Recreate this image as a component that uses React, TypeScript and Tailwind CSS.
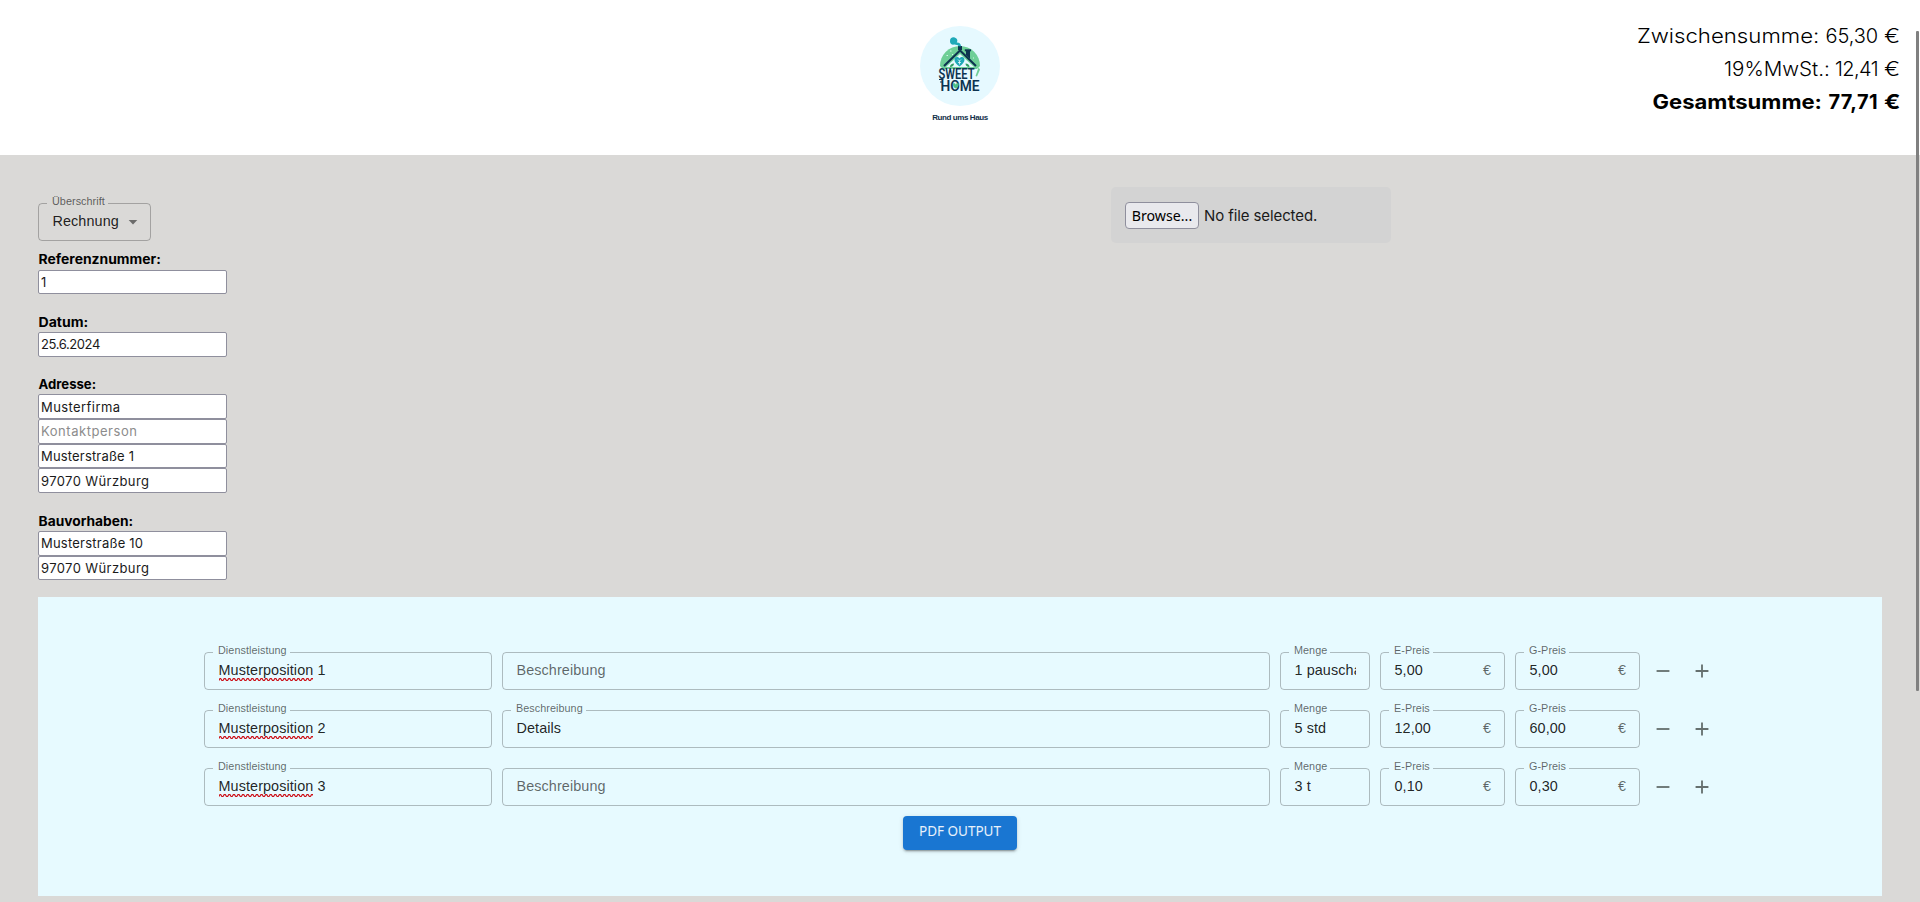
import type { ReactNode } from "react";

type FieldProps = { label: string; value?: ReactNode; className: string; euro?: boolean; children?: ReactNode };

function Field({ label, value, className, euro, children }: FieldProps) {
  return (
    <div className={`relative flex h-[38px] items-center px-[14px] text-[14.4px] leading-[21px] text-black/87 ${className}`}>
      <fieldset
        className={`pointer-events-none absolute inset-x-0 bottom-0 rounded-[4px] border border-black/25 px-[8px] ${value !== undefined ? "-top-[5px]" : "top-0"}`}
      >
        {value !== undefined && (
          <legend className="h-[11px] pr-[3px] pl-[5px] text-[10.8px] leading-[11px] tracking-[0.06px] text-black/60">
            <span className="relative -top-[2px] block whitespace-nowrap">{label}</span>
          </legend>
        )}
      </fieldset>
      <span className="relative -top-px -mb-[4px] min-w-0 flex-1 overflow-hidden pb-[4px] pl-[0.5px] tracking-[0.09px] whitespace-nowrap">
        {value ?? <span className="text-black/60">{label}</span>}
      </span>
      {euro && <span className="relative -top-px text-black/60">€</span>}
      {children}
    </div>
  );
}

const wave = "M0 2.5" + Array.from({ length: 22 }, (_, i) => `Q${i * 4.6 + 1.15} -0.9 ${i * 4.6 + 2.3} 1.5T${i * 4.6 + 4.6} 1.5`).join("");

function Misspelled({ children }: { children: string }) {
  return (
    <span className="relative inline-block">
      {children}
      <svg className="absolute bottom-0 left-0 w-full overflow-hidden" height="3" fill="none" stroke="#cc1018" strokeWidth="1.2">
        <path d={wave} />
      </svg>
    </span>
  );
}

function TextInput({ value, placeholder, tracking }: { value?: string; placeholder?: string; tracking: string }) {
  return (
    <input
      className={`block h-[24.67px] w-[189px] rounded-[2px] border border-[#8f8f9d] bg-white px-[2px] text-[13px] text-[#1a1a1a] placeholder:text-[#8c8c8c] ${tracking}`}
      defaultValue={value}
      placeholder={placeholder}
    />
  );
}

function Label({ children, scale }: { children: string; scale: string }) {
  return <div className={`h-[22px] origin-left pl-[0.5px] text-[13px] leading-[18px] font-bold text-black ${scale}`}>{children}</div>;
}

function Total({ label, amount, labelClass, amountClass, bold }: { label: string; amount: string; labelClass: string; amountClass: string; bold?: boolean }) {
  return (
    <div className={`flex h-[32.8px] items-center justify-end text-[20px] text-black ${bold ? "font-bold" : "font-[350]"}`}>
      <span className={`origin-right ${labelClass}`}>{label}</span>
      <span className={`ml-[5px] text-right whitespace-nowrap ${amountClass}`}>{amount}</span>
      <span className="ml-[6px] w-[16px] origin-left scale-x-120">€</span>
    </div>
  );
}

function Logo() {
  return (
    <svg width="80" height="80" viewBox="0 0 80 80">
      <circle cx="40" cy="40" r="40" fill="#e6f9ff" />
      <path d="M20 40a20 20 0 1 1 40 0l-3 3H23z" fill="#6fcf97" />
      <path d="M26 41 40 28l14 13z" fill="#e6f9ff" />
      <path d="M38 24v-4h4v4zM46 24h4v9l-4-4z" fill="#0c3350" />
      <path d="M44.800 23.300h6.200v2h-6.200z" fill="#0c3350" />
      <path d="m24 40 16-15.500L56 40" fill="none" stroke="#0c3350" strokeWidth="2" />
      <path d="M30 15.500c-.3-4 3.500-5.200 6-3.300 2 1.500 1.300 3.500.7 4.300 2.500-.2 4.300 1.200 4.300 3.700h-2.500c-.3-1.700-2.500-1.200-4-1.700-2.500.6-4.500-.5-4.500-3z" fill="#1fa9b8" />
      <path d="M39.500 40.500c-7-4.500-5.500-9.500-2.500-9.500 1.300 0 2.100.7 2.500 1.500.4-.8 1.200-1.500 2.500-1.500 3 0 4.500 5-2.500 9.500z" fill="#1fa9b8" />
      <path d="m38 33.500 1.500 1.500 1.500-1.500M39.500 35v3.500M38 36.500h3" fill="none" stroke="#e6f9ff" strokeWidth=".8" />
      <path d="M30 41c0-2 1.500-3.500 4-3.500 0 2-1.500 3.500-4 3.500zM49.500 41c0-2-1.500-3.500-4-3.500 0 2 1.500 3.500 4 3.500z" fill="#2f9e63" />
      <path d="M26.500 29.500h1.500M30 25h1.500M32 28.500h1M53 32h1" stroke="#d5f5e8" strokeWidth="1" />
      <path d="m55.500 50 3-8.500 1.500 2-3 7z" fill="#6fcf97" />
      <text x="18.500" y="52.500" textLength="36" lengthAdjust="spacingAndGlyphs" fontFamily="Roboto, sans-serif" fontWeight="600" fontSize="15" fill="#0c3350">SWEET</text>
      <text x="20.500" y="65" textLength="39" lengthAdjust="spacingAndGlyphs" fontFamily="Roboto, sans-serif" fontWeight="600" fontSize="15" fill="#0c3350">HOME</text>
      <path d="M32.800 57.500c1.500-.5 2.500 0 3 1.200.5-1.200 1.500-1.700 3-1.200 0 2.500-1 4.200-3 5-2-.8-3-2.500-3-5z" fill="#4fbf88" />
      <path d="M19 53.500h4.500M20 56h3" stroke="#0c3350" strokeWidth="1" />
    </svg>
  );
}

const rows: { n: string; details?: string; menge: string; ep: string; gp: string }[] = [
  { n: "1", menge: "1 pauschal", ep: "5,00", gp: "5,00" },
  { n: "2", details: "Details", menge: "5 std", ep: "12,00", gp: "60,00" },
  { n: "3", menge: "3 t", ep: "0,10", gp: "0,30" },
];

export default function App() {
  return (
    <div className="relative h-[902px] w-full overflow-hidden bg-[#dad9d7] font-['Inter',sans-serif]">
      <header className="grid h-[155px] grid-cols-3 bg-white">
        <div />
        <div className="flex flex-col items-center pt-[26px]">
          <Logo />
          <div className="mt-[6px] h-[12px] font-['Liberation_Sans',sans-serif] text-[8px] leading-[12px] font-bold tracking-[-0.4px] text-[#12304a]">Rund ums Haus</div>
        </div>
        <div className="pt-[20px] pr-[20px]">
          <Total label="Zwischensumme:" amount="65,30" labelClass="scale-x-111" amountClass="w-[53.5px] tracking-[-0.1px]" />
          <Total label="19%MwSt.:" amount="12,41" labelClass="scale-x-103" amountClass="w-[43.5px] tracking-[-0.6px]" />
          <Total label="Gesamtsumme:" amount="77,71" labelClass="scale-x-110" amountClass="w-[51px] tracking-[0.4px]" bold />
        </div>
      </header>

      <main className="px-[38px]">
        <div className="flex h-[442px] items-start">
          <div className="w-[1073px] pt-[48px]">
            <div className="font-['Liberation_Sans',sans-serif]">
              <Field label="Überschrift" value="Rechnung" className="w-[113px]">
                <svg className="-mr-px" width="10" height="5" viewBox="0 0 10 5">
                  <path d="M.7 0h8.600L5 4.500z" fill="#6b6b6a" />
                </svg>
              </Field>
            </div>
            <div className="mt-[9px]">
              <Label scale="scale-x-107">Referenznummer:</Label>
              <div className="-mt-[2.200px]">
                <TextInput value="1" tracking="tracking-normal" />
              </div>
            </div>
            <div className="mt-[19px]">
              <Label scale="scale-x-108">Datum:</Label>
              <div className="-mt-[3.500px]">
                <TextInput value="25.6.2024" tracking="tracking-[-0.4px]" />
              </div>
            </div>
            <div className="mt-[18.700px]">
              <Label scale="scale-x-101">Adresse:</Label>
              <div className="-mt-[3px]">
                <TextInput value="Musterfirma" tracking="tracking-[0.42px]" />
                <TextInput placeholder="Kontaktperson" tracking="tracking-[0.54px]" />
                <TextInput value="Musterstraße 1" tracking="tracking-[0.17px]" />
                <TextInput value="97070 Würzburg" tracking="tracking-[0.4px]" />
              </div>
            </div>
            <div className="mt-[19px]">
              <Label scale="scale-x-106">Bauvorhaben:</Label>
              <div className="-mt-[3px]">
                <TextInput value="Musterstraße 10" tracking="tracking-[0.22px]" />
                <TextInput value="97070 Würzburg" tracking="tracking-[0.4px]" />
              </div>
            </div>
          </div>
          <div className="mt-[32px] flex h-[56px] w-[280px] items-center rounded-[5px] bg-[#d3d3d3] px-[14px]">
            <button className="h-[27px] w-[74px] rounded-[4px] border border-[#8f8f9d] bg-[#e9e9ed] font-['Noto_Sans',sans-serif] text-[14.200px] leading-[25px] text-black">Browse...</button>
            <span className="mt-[2px] ml-[5px] text-[15px] tracking-[-0.1px] text-[#1a1a1a]">No file selected.</span>
          </div>
        </div>

        <section className="h-[299px] bg-[#e7faff] pt-[55px] pl-[166px] font-['Liberation_Sans',sans-serif]">
          <div className="flex flex-col gap-[20px]">
            {rows.map((r) => (
              <div key={r.n} className="flex h-[38px] items-center gap-[10px]">
                <Field
                  label="Dienstleistung"
                  className="w-[288px]"
                  value={
                    <>
                      <Misspelled>Musterposition</Misspelled> {r.n}
                    </>
                  }
                />
                <Field label="Beschreibung" className="w-[768px]" value={r.details} />
                <Field label="Menge" className="w-[90px]" value={r.menge} />
                <Field label="E-Preis" className="w-[125px]" value={r.ep} euro />
                <Field label="G-Preis" className="w-[125px]" value={r.gp} euro />
                <div className="ml-[2px] flex gap-[16.500px] text-[#66706f]">
                  <svg width="22" height="22" viewBox="0 0 24 24" fill="currentColor">
                    <path d="M19 13H5v-2h14z" />
                  </svg>
                  <svg width="22" height="22" viewBox="0 0 24 24" fill="currentColor">
                    <path d="M19 13h-6v6h-2v-6H5v-2h6V5h2v6h6z" />
                  </svg>
                </div>
              </div>
            ))}
          </div>
          <button className="mt-[10px] ml-[699px] block h-[34px] w-[114px] rounded-[4px] bg-[#1976d2] pb-[4px] font-['Noto_Sans',sans-serif] text-[13.500px] leading-[24px] text-white/90 shadow-[0_3px_1px_-2px_rgba(0,0,0,0.2),0_2px_2px_0_rgba(0,0,0,0.14),0_1px_5px_0_rgba(0,0,0,0.12)]">
            PDF OUTPUT
          </button>
        </section>
      </main>

      <div className="absolute top-[31px] right-px h-[660px] w-[3px] rounded-[1px] bg-[#808080]" />
    </div>
  );
}
